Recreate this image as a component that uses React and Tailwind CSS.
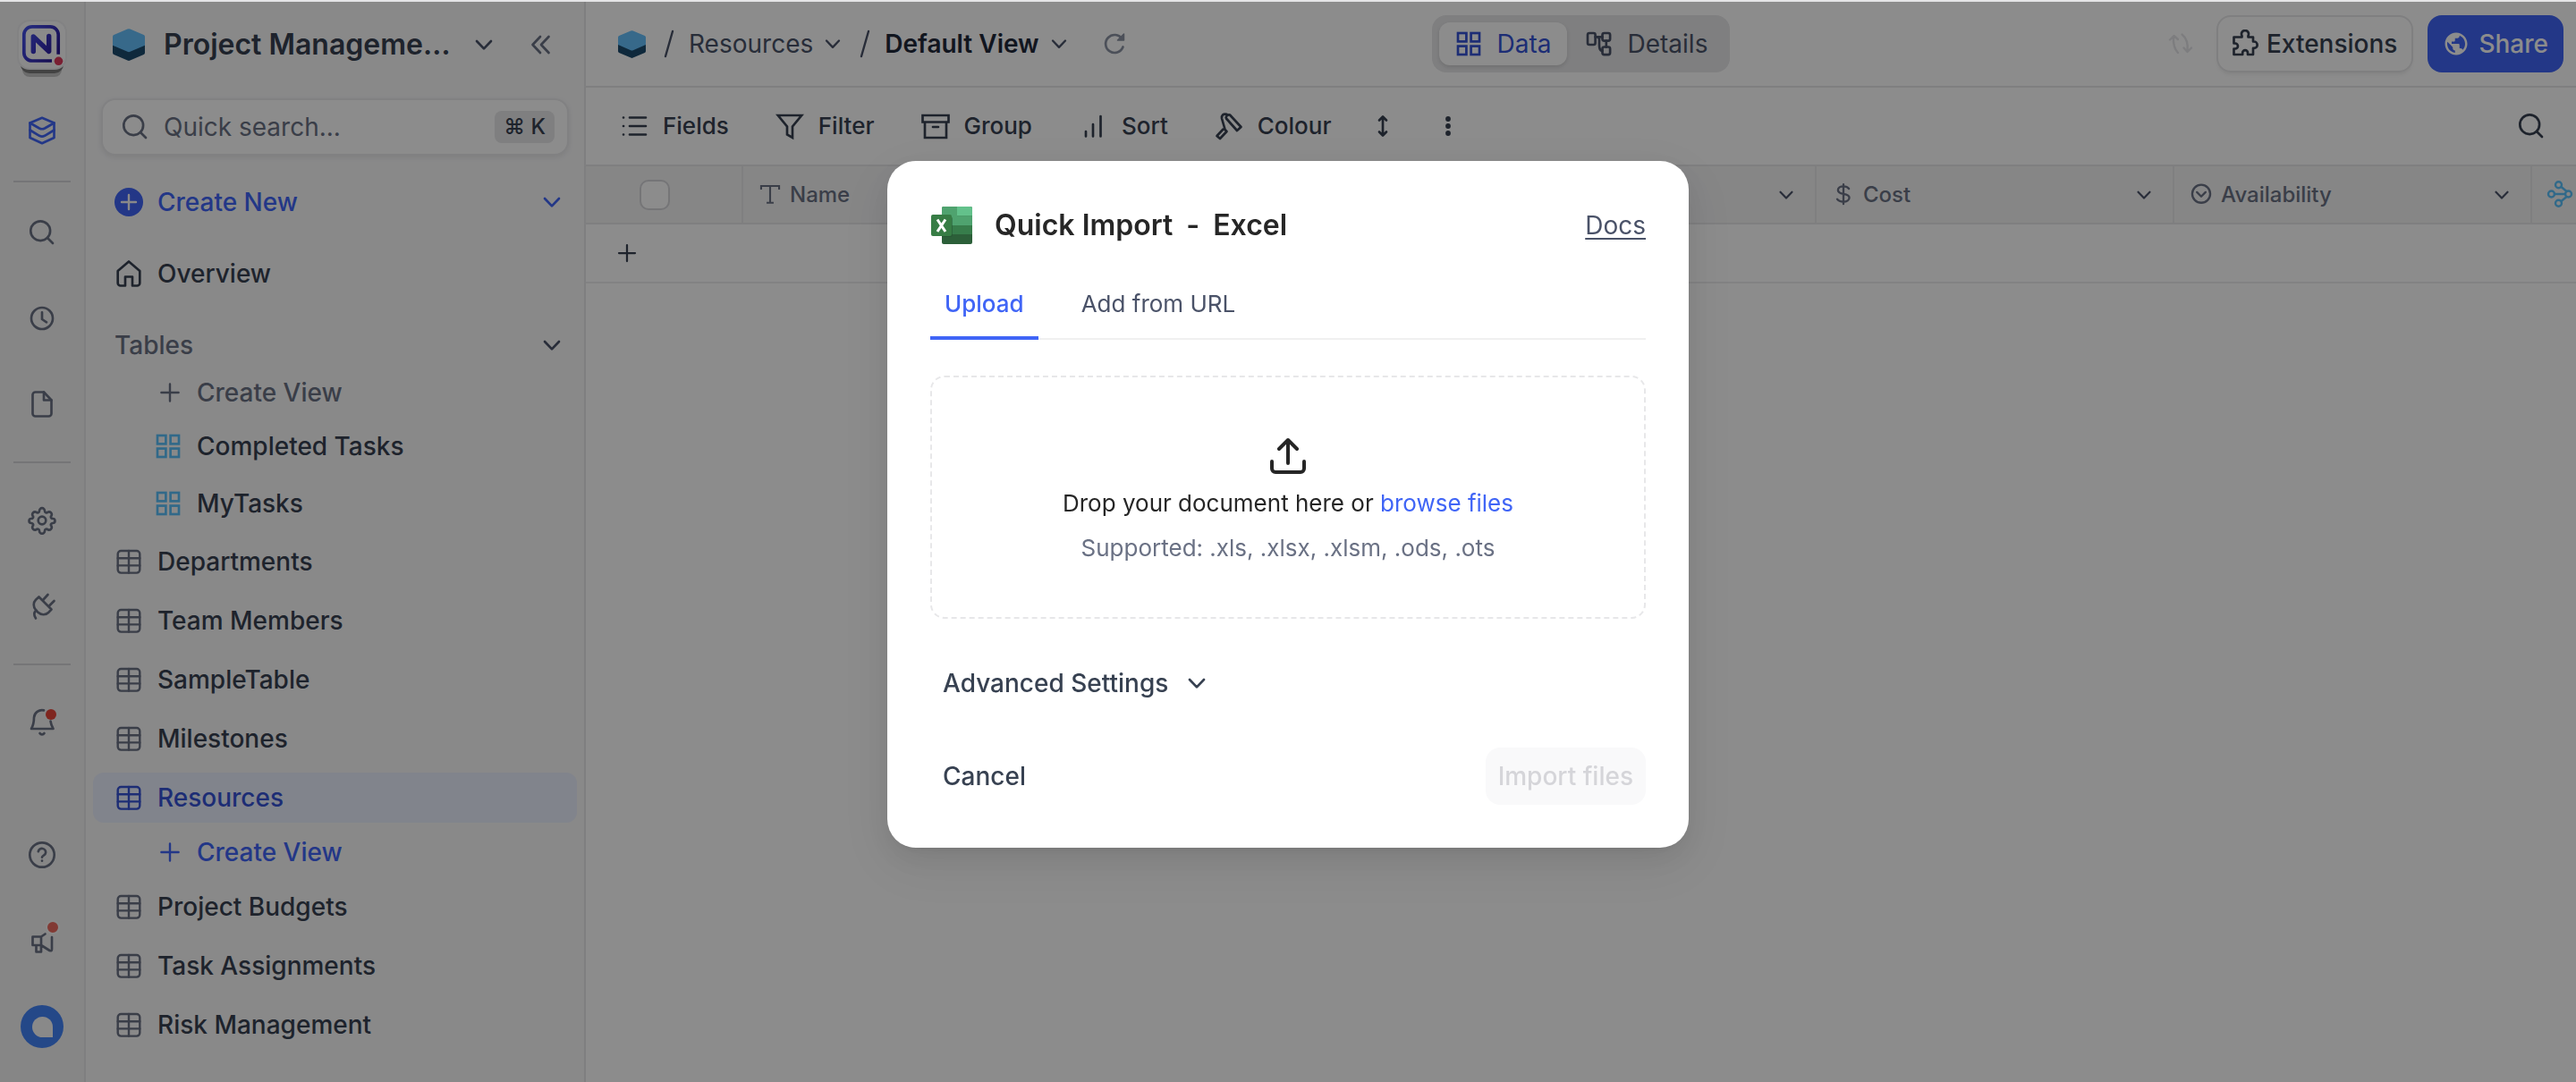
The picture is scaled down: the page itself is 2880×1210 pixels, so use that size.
import React from "react";

/* Line icon on a 32px grid */
function Icon({ children, className = "", size = 32, sw = 2.67, fill = "none" }) {
  return (
    <svg
      width={size}
      height={size}
      viewBox="0 0 32 32"
      fill={fill}
      stroke="currentColor"
      strokeWidth={sw}
      strokeLinecap="round"
      strokeLinejoin="round"
      className={`shrink-0 ${className}`}
      aria-hidden="true"
    >
      {children}
    </svg>
  );
}

const Chevron = ({ className = "", size = 32 }) => (
  <Icon className={className} size={size}>
    <path d="M8 12l8 8.400 8-8.400" />
  </Icon>
);
const SearchIcon = ({ className = "" }) => (
  <Icon className={className}>
    <circle cx="14.200" cy="14.200" r="10.900" />
    <path d="M28 28l-6-6" />
  </Icon>
);
const TableIcon = ({ className = "" }) => (
  <Icon className={className} sw={2.4}>
    <rect x="3.700" y="4" width="24.600" height="24.600" rx="3.600" />
    <path d="M16 4v24.600M3.700 12.200h24.600M3.700 20.400h24.600" />
  </Icon>
);
const GridIcon = ({ className = "" }) => (
  <Icon className={className}>
    <g strokeLinejoin="miter">
      <rect x="4" y="4" width="9.400" height="9.400" />
      <rect x="18.600" y="4" width="9.400" height="9.400" />
      <rect x="4" y="18.600" width="9.400" height="9.400" />
      <rect x="18.600" y="18.600" width="9.400" height="9.400" />
    </g>
  </Icon>
);
const PlusIcon = ({ className = "", size = 32 }) => (
  <Icon className={className} size={size} sw={2.4}>
    <path d="M16 6.400v19.200M6.400 16h19.200" />
  </Icon>
);
const BaseIcon = ({ size, className = "" }) => (
  <svg width={size} height={size} viewBox="0 0 36 36" className={`shrink-0 ${className}`} aria-hidden="true">
    <path d="M0 18h36v9q0 1.400-1.300 2L19.500 35.500q-1.500.8-3 0L1.300 29Q0 28.400 0 27Z" fill="#1d4b6d" />
    <path d="M16.500.5q1.500-.7 3 0L34.700 7Q36 7.600 36 9v9.700L19.500 25.800q-1.500.7-3 0L0 18.700V9q0-1.400 1.300-2Z" fill="#64bffb" />
  </svg>
);

function NocoLogo() {
  return (
    <div className="flex h-[64px] w-[56px] flex-col items-center">
      <div className="relative z-20 flex size-[56px] shrink-0 items-center justify-center rounded-[14px] border-2 border-[#ededee] bg-[#fbfbfc]">
        <svg width="48" height="48" viewBox="0 0 48 48" fill="none" aria-hidden="true">
          <path d="M35 42H12.800A9 9 0 0 1 3.800 33V12.800A9 9 0 0 1 12.800 3.800h20.400a9 9 0 0 1 9 9V34.700" stroke="url(#noco)" strokeWidth="3.700" />
          <path d="M14.300 31.500V15l17.400 16.500V14.500" stroke="url(#noco)" strokeWidth="5.400" strokeLinecap="round" strokeLinejoin="round" />
          <circle cx="42.500" cy="42.300" r="4.800" fill="#dd3a5c" />
          <defs>
            <linearGradient id="noco" x1="4" y1="4" x2="44" y2="30" gradientUnits="userSpaceOnUse">
              <stop stopColor="#4351e8" />
              <stop offset="0.500" stopColor="#3a36c4" />
              <stop offset="1" stopColor="#2a1a94" />
            </linearGradient>
          </defs>
        </svg>
      </div>
      <div className="relative z-10 -mt-2 h-3 w-12 shrink-0 rounded-b-[10px] bg-[#7a7a7a]" />
      <div className="-mt-2 h-3 w-11 shrink-0 rounded-b-[8px] bg-[#c4c4c4]" />
    </div>
  );
}

function RailButton({ label, className = "", children }) {
  return (
    <button type="button" aria-label={label} className={`relative flex items-center justify-center ${className}`}>
      {children}
    </button>
  );
}

function Rail() {
  return (
    <nav className="flex w-24 shrink-0 flex-col items-center border-r-2 border-[#e7e7e9] bg-[#f4f4f5] text-[#6a7184]">
      <div className="mt-5">
        <NocoLogo />
      </div>
      <RailButton label="Bases" className="mt-5 h-20 w-16 text-[#4065f6]">
        <Icon>
          <path d="M2.500 7.500L16 1.800l13.500 5.700v16.500L16 30.200 2.500 24Z" />
          <path d="M2.500 7.500l10.500 6q3 1.500 6 0l10.500-6M2.500 15.500l10.500 6.300q3 1.500 6 0l10.500-6.300" />
        </Icon>
      </RailButton>
      <hr className="mt-4 h-0.5 w-16 border-0 bg-[#d5d5d9]" />
      <RailButton label="Search" className="mt-2 h-24 w-16">
        <SearchIcon />
      </RailButton>
      <RailButton label="Recent" className="h-24 w-16">
        <Icon>
          <circle cx="16" cy="16" r="12" />
          <path d="M16 9.300V17l5 3.300" />
        </Icon>
      </RailButton>
      <RailButton label="Documents" className="h-24 w-16">
        <Icon>
          <path d="M18 2.500H8.500A3 3 0 0 0 5.500 5.500v21a3 3 0 0 0 3 3h15a3 3 0 0 0 3-3V11.500Z" />
          <path d="M18 2.500V11.500h8.500" />
        </Icon>
      </RailButton>
      <hr className="mt-4 h-0.5 w-16 shrink-0 border-0 bg-[#d5d5d9]" />
      <RailButton label="Settings" className="mt-4 h-24 w-16">
        <Icon>
          <circle cx="16" cy="16" r="4.300" />
          <path d="M13 5.200a3 3 0 0 1 6 0c0 1.900 2.100 2.800 3.500 1.500a3 3 0 0 1 4 4c-1.300 1.400-.4 3.300 1.500 3.300a2.500 2.500 0 0 1 0 5c-1.900 0-2.800 1.900-1.500 3.300a3 3 0 0 1-4 4c-1.400-1.300-3.500-.4-3.500 1.500a3 3 0 0 1-6 0c0-1.900-2.100-2.800-3.500-1.500a3 3 0 0 1-4-4c1.300-1.400.4-3.300-1.500-3.300a2.500 2.500 0 0 1 0-5c1.900 0 2.800-1.900 1.500-3.300a3 3 0 0 1 4-4c1.400 1.300 3.500.4 3.500-1.500Z" />
        </Icon>
      </RailButton>
      <RailButton label="Integrations" className="h-24 w-16">
        <Icon>
          <path d="M12.500 5.500l14 14-3 3.200c-3.500 3.500-8.500 3.200-12 0l-2.500-2.500c-3-3.500-3-8.500 0-11.500Z" />
          <path d="M17.500 8.500l5-5.500M24.500 15l5-5M9.500 20.500c-3 2.500-2.500 6-.5 9" />
        </Icon>
      </RailButton>
      <hr className="mt-4 h-0.5 w-16 shrink-0 border-0 bg-[#d5d5d9]" />
      <RailButton label="Notifications" className="mt-4 h-24 w-16">
        <Icon>
          <path d="M18 2.400A9 9 0 0 0 7 10.500c0 6-1 9-3 12.500h24.500c-1.500-2.500-2.500-5-3-8.500M13.500 28a3 3 0 0 0 5 0" />
        </Icon>
        <span className="absolute top-[33px] right-4 size-3 rounded-full bg-[#e8463a]" />
      </RailButton>
      <div className="flex-1" />
      <RailButton label="Help" className="h-24 w-16">
        <Icon>
          <circle cx="16" cy="16" r="13.700" />
          <path d="M11.800 12.300a4.200 4.200 0 0 1 8.300 1.200c0 2.800-4.100 3.500-4.100 5.200M16 22.600v.1" />
        </Icon>
      </RailButton>
      <RailButton label="What's new" className="h-24 w-16">
        <Icon>
          <path d="M5.500 11.500h9.500v9.500H5.500ZM15 11.500l4.500-3M27 12v13.500q0 2.500-2.500 1.500L15 21M9.500 21v7.500h5.500V21" />
        </Icon>
        <span className="absolute top-[25px] right-3 size-4 rounded-full border-2 border-[#fafafa] bg-[#ec6a5f]" />
      </RailButton>
      <button
        type="button"
        aria-label="Account"
        className="mt-6 mb-[38px] flex size-12 shrink-0 items-center justify-center rounded-full bg-[#4283f8]"
      >
        <span className="size-[23px] rounded-full rounded-br-[3px] bg-[#fafafa]" />
      </button>
    </nav>
  );
}

function TableRow({ name, active }) {
  return (
    <li className="flex h-[66px] items-center px-2">
      <a
        href="#"
        className={`flex h-14 flex-1 items-center gap-4 rounded-xl px-6 font-medium ${
          active ? "bg-[#ebf0ff] text-[#3553d6]" : "text-[#374151]"
        }`}
      >
        <TableIcon className={active ? "" : "text-[#6a7184]"} />
        {name}
      </a>
    </li>
  );
}

function ViewRow({ name }) {
  return (
    <li>
      <a href="#" className="flex h-16 items-center gap-4 pl-[76px] font-medium text-[#374151]">
        <GridIcon className="text-[#5ac0fa]" />
        {name}
      </a>
    </li>
  );
}

function CreateView({ active }) {
  return (
    <li>
      <button
        type="button"
        className={`flex h-14 items-center gap-3.5 pl-[78px] font-medium ${active ? "text-[#4065f6]" : "text-[#6a7184]"}`}
      >
        <PlusIcon />
        Create View
      </button>
    </li>
  );
}

function Sidebar() {
  return (
    <aside className="flex w-[559px] shrink-0 flex-col border-r-2 border-[#e7e7e9] bg-[#f9f9fa] text-[28px] leading-9">
      <div className="flex h-24 items-center justify-between pr-8 pl-[30px]">
        <button
          type="button"
          className="flex items-center gap-[21px] text-left text-[32px] leading-10 font-semibold whitespace-nowrap text-[#374151]"
        >
          <BaseIcon size={36} />
          Project Manageme…
          <Chevron className="text-[#4a5268]" />
        </button>
        <button type="button" aria-label="Collapse sidebar" className="text-[#6a7184]">
          <Icon>
            <path d="M15 7l-8.500 9L15 25M24.500 7L16 16l8.500 9" />
          </Icon>
        </button>
      </div>
      <label className="mx-[17px] mt-3 flex h-16 items-center rounded-2xl border-2 border-[#ebebed] bg-white pr-3.5 pl-5 text-[#6a7184] shadow-[0_2px_6px_rgba(0,0,0,0.08)]">
        <SearchIcon />
        <input
          aria-label="Quick search"
          placeholder="Quick search..."
          className="ml-4 min-w-0 flex-1 bg-transparent outline-none placeholder:text-[#6a7184]"
        />
        <kbd className="flex h-9 items-center rounded-lg bg-[#e7e7e9] px-2.5 font-['Inter',sans-serif] text-2xl font-medium text-[#374151]">
          ⌘ K
        </kbd>
      </label>
      <button type="button" className="mt-3 flex h-20 items-center gap-4 px-8 font-medium text-[#4065f6]">
        <svg width="32" height="32" viewBox="0 0 32 32" className="shrink-0" aria-hidden="true">
          <circle cx="16" cy="16" r="16" fill="currentColor" />
          <path d="M16 8v16M8 16h16" stroke="#f9f9fa" strokeWidth="2.400" strokeLinecap="round" />
        </svg>
        Create New
        <Chevron className="-mr-3 ml-auto" />
      </button>
      <a href="#" className="flex h-20 items-center gap-4 px-8 font-medium text-[#374151]">
        <Icon>
          <path d="M16 2.500L3.700 13v13.500a3 3 0 0 0 3 3H12V19.500h8v10h5.300a3 3 0 0 0 3-3V13Z" />
        </Icon>
        Overview
      </a>
      <button type="button" className="mt-[15px] flex h-[50px] items-center px-8 font-medium text-[#6a7184]">
        Tables
        <Chevron className="-mr-3 ml-auto text-[#4a5268]" />
      </button>
      <ul>
        <CreateView />
        <ViewRow name="Completed Tasks" />
        <ViewRow name="MyTasks" />
        <TableRow name="Departments" />
        <TableRow name="Team Members" />
        <TableRow name="SampleTable" />
        <TableRow name="Milestones" />
        <TableRow name="Resources" active />
        <CreateView active />
        <TableRow name="Project Budgets" />
        <TableRow name="Task Assignments" />
        <TableRow name="Risk Management" />
      </ul>
    </aside>
  );
}

function Header() {
  return (
    <header className="flex h-24 shrink-0 items-center border-b-2 border-[#e7e7e9] px-3.5 text-[28px] leading-9">
      <div className="flex flex-1 items-center">
        <BaseIcon size={31} className="ml-[22px]" />
        <svg width="12" height="32" viewBox="0 0 12 32" className="ml-5" aria-hidden="true">
          <path d="M10 2L2 30" stroke="#4a5268" strokeWidth="2.400" strokeLinecap="round" />
        </svg>
        <button type="button" className="ml-4 flex items-center gap-2 text-[#4a5268]">
          Resources <Chevron size={28} />
        </button>
        <svg width="12" height="32" viewBox="0 0 12 32" className="ml-4" aria-hidden="true">
          <path d="M10 2L2 30" stroke="#4a5268" strokeWidth="2.400" strokeLinecap="round" />
        </svg>
        <button type="button" className="ml-4 flex items-center gap-2 font-semibold text-[#1f293a]">
          Default View <Chevron size={28} className="text-[#4a5268]" />
        </button>
        <button type="button" aria-label="Reload" className="ml-8 text-[#8a92a3]">
          <Icon>
            <path d="M25.500 19.500A10 10 0 1 1 24.500 10.500" />
            <path d="M26.500 5v7h-7Z" fill="currentColor" strokeWidth="1.500" />
          </Icon>
        </button>
      </div>
      <div className="flex h-16 items-center rounded-2xl bg-[#e7e7e9] p-2 text-[#4a5268]">
        <button
          type="button"
          className="flex h-12 items-center gap-4 rounded-xl bg-white px-[17px] text-[#3553d6] shadow-[0_2px_4px_rgba(0,0,0,0.12)]"
        >
          <GridIcon />
          Data
        </button>
        <button type="button" className="flex h-12 items-center gap-4 pr-[17px] pl-5">
          <Icon>
            <rect x="3" y="4" width="8.600" height="13" rx="2" />
            <rect x="19.500" y="4" width="8.600" height="8.600" rx="2" />
            <rect x="19.500" y="19.500" width="8.600" height="8.600" rx="2" />
            <path d="M11.600 8.300h8M23.800 12.600v7M13.500 8.500c3 0 2.500 3 2.500 6s-.5 9.300 3.500 9.300" />
          </Icon>
          Details
        </button>
      </div>
      <div className="flex flex-1 items-center justify-end font-medium">
        <Icon className="text-[#e4e4e7]" sw={2.4}>
          <path d="M4 11.500L8.500 7 13 11M8 7.500C7.500 15 9 22 13 26M17.500 5.500c5 4 7 10 6 18.500M19.500 20.500l4 4.500 4.500-4.500" />
        </Icon>
        <button
          type="button"
          className="ml-6 flex h-16 items-center gap-2 rounded-2xl border-2 border-[#e7e7e9] pr-4 pl-3.5 text-[#374151] shadow-[0_4px_4px_-2px_rgba(0,0,0,0.08)]"
        >
          <Icon>
            <path d="M12.500 7a4 4 0 1 1 7 0V8.500h5.500v5h1a3.700 3.700 0 0 1 0 7.400h-1v7.100H19v-2a2.900 2.900 0 0 0-5.800 0v2H3.500v-6.500h1.500a3 3 0 0 0 0-6H3.500V8.500h9Z" />
          </Icon>
          Extensions
        </button>
        <button type="button" className="ml-4 flex h-16 items-center gap-2.5 rounded-2xl bg-[#4065f6] px-[17px] text-white">
          <svg width="30" height="30" viewBox="0 0 24 24" fill="currentColor" className="shrink-0" aria-hidden="true">
            <path d="M12 2C6.480 2 2 6.480 2 12s4.480 10 10 10 10-4.480 10-10S17.520 2 12 2zm-1 17.930c-3.950-.49-7-3.850-7-7.930 0-.62.08-1.210.21-1.790L9 15v1c0 1.100.9 2 2 2v1.930zm6.900-2.540c-.26-.81-1-1.390-1.900-1.390h-1v-3c0-.55-.45-1-1-1H8v-2h2c.55 0 1-.45 1-1V7h2c1.100 0 2-.9 2-2v-.41c2.930 1.190 5 4.060 5 7.410 0 2.080-.8 3.970-2.100 5.390z" />
          </svg>
          Share
        </button>
      </div>
    </header>
  );
}

function ToolButton({ label, children }) {
  return (
    <button type="button" className="flex items-center gap-4">
      {children}
      {label}
    </button>
  );
}

function Toolbar() {
  return (
    <div className="flex h-[88px] shrink-0 items-center gap-[41px] border-b-2 border-[#e7e7e9] pr-[34px] pl-[38px] text-[26px] leading-8 font-medium text-[#374151]">
      <div className="flex items-center gap-[52px]">
        <ToolButton label="Fields">
          <Icon>
            <path d="M11 6.500h18M11 16h18M11 25.500h18M4 6.500h.1M4 16h.1M4 25.500h.1" />
          </Icon>
        </ToolButton>
        <ToolButton label="Filter">
          <Icon>
            <path d="M2.800 4h26.400L19 16.500V29l-6-3.500v-9Z" strokeLinejoin="miter" />
          </Icon>
        </ToolButton>
        <ToolButton label="Group">
          <Icon>
            <path d="M1.500 4h29v7.500h-29ZM4 11.500h24V29H4ZM13 17h6" strokeLinejoin="miter" />
          </Icon>
        </ToolButton>
        <ToolButton label="Sort">
          <Icon>
            <path d="M8 22v5.500M16 14v13.500M24.500 5v22.500" />
          </Icon>
        </ToolButton>
        <ToolButton label="Colour">
          <Icon>
            <path d="M17 3.500l12.500 13.500-4.500 4L13 7.500c-1-2 1.500-5 4-4ZM13.500 2.800c-4-1-6 1.500-5.500 4.700l3.500 12M11 19.500l2.500 2.500-7.500 8-3.500-3 7-7.500Z" />
          </Icon>
        </ToolButton>
      </div>
      <button type="button" aria-label="Row height">
        <Icon>
          <path d="M16 6v20M12 9.500L16 5.500l4 4M12 22.500l4 4 4-4" />
        </Icon>
      </button>
      <button type="button" aria-label="More">
        <Icon fill="currentColor" sw={0}>
          <circle cx="16" cy="8" r="2.900" />
          <circle cx="16" cy="16" r="2.900" />
          <circle cx="16" cy="24" r="2.900" />
        </Icon>
      </button>
      <button type="button" aria-label="Search records" className="ml-auto">
        <SearchIcon />
      </button>
    </div>
  );
}

function HeadCell({ icon, label }) {
  return (
    <th className="w-[400px] border-r-2 border-[#e7e7e9] p-0 font-medium">
      <div className="flex items-center gap-2 pr-[19px] pl-4">
        {icon}
        <span>{label}</span>
        <Chevron size={26} className="ml-auto text-[#4a5268]" />
      </div>
    </th>
  );
}

function Grid() {
  return (
    <div className="min-h-0 flex-1 overflow-hidden">
      <table className="w-[2576px] table-fixed border-separate border-spacing-0 text-left text-2xl leading-8 text-[#6a7184]">
        <thead>
          <tr className="h-[65px] bg-[#f4f4f5] [&>th]:border-b-2 [&>th]:border-[#e7e7e9]">
            <th className="w-44 border-r-2 p-0">
              <input
                type="checkbox"
                aria-label="Select all records"
                className="ml-[60px] block size-[34px] appearance-none rounded-[10px] border-2 border-[#d5d5d9] bg-white"
              />
            </th>
            <HeadCell
              label="Name"
              icon={
                <Icon size={28} sw={2.4}>
                  <path d="M4.500 9V4.500h23V9M16 4.500V26M11.500 26h9" strokeLinecap="butt" strokeLinejoin="miter" />
                </Icon>
              }
            />
            <HeadCell />
            <HeadCell />
            <HeadCell
              label="Cost"
              icon={
                <Icon size={28}>
                  <path d="M16 2.500v25M23 8c-1.500-2-4-3-7-3-4 0-7 2-7 4.700s2.500 4.200 7 5 7.500 1.900 7.500 4.800-3 5.200-7.500 5.200c-4 0-6.500-1-8-3.300" />
                </Icon>
              }
            />
            <HeadCell
              label="Availability"
              icon={
                <Icon size={28}>
                  <circle cx="16" cy="14.500" r="11.500" />
                  <path d="M10.500 12.500l5.500 5.500 5.500-5.500" />
                </Icon>
              }
            />
            <HeadCell
              icon={
                <Icon size={32} sw={2.4} className="text-[#5ac0fa]">
                  <circle cx="5.500" cy="15" r="3.500" />
                  <circle cx="24.500" cy="15" r="3.500" />
                  <circle cx="13.500" cy="4.800" r="3.500" />
                  <circle cx="13.500" cy="25.200" r="3.500" />
                  <path d="M9 15h12M16.500 7l6 5M16.500 23l6-5" />
                </Icon>
              }
            />
          </tr>
        </thead>
        <tbody>
          <tr className="h-[66px] bg-white">
            <td colSpan={7} className="border-b-2 border-[#ededef] p-0 pl-[31px]">
              <button type="button" aria-label="Add record" className="block text-[#374151]">
                <PlusIcon size={30} />
              </button>
            </td>
          </tr>
        </tbody>
      </table>
    </div>
  );
}

function ExcelIcon() {
  return (
    <svg width="48" height="48" viewBox="0 0 48 48" className="shrink-0" aria-hidden="true">
      <rect x="13" y="3" width="34" height="42" rx="2" fill="#2c5f39" />
      <path d="M13 13.500h34V34H13Z" fill="#377d4b" />
      <path d="M13 5a2 2 0 0 1 2-2h15v21H13Z" fill="#4fa36f" />
      <path d="M30 3h15a2 2 0 0 1 2 2v8.500H30Z" fill="#63c18b" />
      <path d="M30 13.500h17V24H30Z" fill="#4fa36f" />
      <path d="M13 14h9q3 0 3 3v17q0 3-3 3h-9Z" fill="#224f2f" opacity=".5" />
      <rect x="1" y="12" width="23" height="24" rx="2" fill="#377d45" />
      <path d="M8 17.500l9 13.500M17 17.500L8 31" stroke="#fff" strokeWidth="3" />
    </svg>
  );
}

function ImportModal() {
  return (
    <div
      role="dialog"
      aria-modal="true"
      aria-labelledby="import-title"
      className="w-full max-w-[896px] rounded-[32px] bg-white p-12 shadow-[0_12px_32px_rgba(0,0,0,0.08),0_6px_12px_-8px_rgba(0,0,0,0.12),0_18px_56px_16px_rgba(0,0,0,0.05)]"
    >
      <div className="flex h-12 items-center">
        <ExcelIcon />
        <h2 id="import-title" className="ml-6 flex gap-[15px] text-[32px] leading-10 font-semibold text-[#262626]">
          <span>Quick Import</span> <span>-</span> <span>Excel</span>
        </h2>
        <a href="#" className="ml-auto text-[28px] leading-9 text-[#4a5268] underline decoration-2 underline-offset-4">
          Docs
        </a>
      </div>
      <div role="tablist" className="mt-6 flex h-20 items-stretch gap-8 text-[26px] shadow-[inset_0_-2px_0_#f0f0f0]">
        <button
          type="button"
          role="tab"
          aria-selected="true"
          className="flex items-center rounded-t-xs border-b-4 border-[#4065f6] px-4 pt-0.5 font-medium text-[#4065f6]"
        >
          Upload
        </button>
        <button type="button" role="tab" aria-selected="false" className="flex items-center px-4 pb-0.5 text-[#4a5268]">
          Add from URL
        </button>
      </div>
      <div className="mt-10 flex h-[272px] flex-col items-center rounded-2xl border-2 border-dashed border-[#e7e7e9] pt-16 text-[26px] leading-[50px]">
        <svg
          width="48"
          height="48"
          viewBox="0 0 48 48"
          fill="none"
          stroke="#262626"
          strokeWidth="4"
          strokeLinecap="round"
          strokeLinejoin="round"
          aria-hidden="true"
        >
          <path d="M6 30v8a4 4 0 0 0 4 4h28a4 4 0 0 0 4-4v-8M24 32V6M14 16L24 6l10 10" />
        </svg>
        <p className="mt-1 text-[#262626]">
          Drop your document here or{" "}
          <button type="button" className="text-[#4065f6]">
            browse files
          </button>
        </p>
        <p className="text-[#6a7184]">Supported: .xls, .xlsx, .xlsm, .ods, .ots</p>
      </div>
      <button type="button" className="mt-10 ml-3.5 flex h-16 items-center gap-4 text-[28px] leading-9 font-medium text-[#374151]">
        Advanced Settings <Chevron />
      </button>
      <div className="mt-10 flex items-center justify-between text-[28px] leading-9 font-medium">
        <button type="button" className="h-16 px-3.5 text-[#374151]">
          Cancel
        </button>
        <button type="button" disabled className="h-16 rounded-2xl bg-[#f9f9fa] px-3.5 text-[#d5d5d9]">
          Import files
        </button>
      </div>
    </div>
  );
}

export default function App() {
  return (
    <div className="flex h-screen flex-col overflow-hidden bg-[#e4e4e6] pt-0.5 font-['Inter',sans-serif]">
      <div className="flex min-h-0 flex-1 bg-white">
        <Rail />
        <Sidebar />
        <main className="flex min-w-0 flex-1 flex-col">
          <Header />
          <Toolbar />
          <Grid />
        </main>
      </div>
      <div className="fixed inset-x-0 top-0.5 bottom-0 z-20 flex items-start justify-center bg-black/45 pt-[178px]">
        <ImportModal />
      </div>
    </div>
  );
}
